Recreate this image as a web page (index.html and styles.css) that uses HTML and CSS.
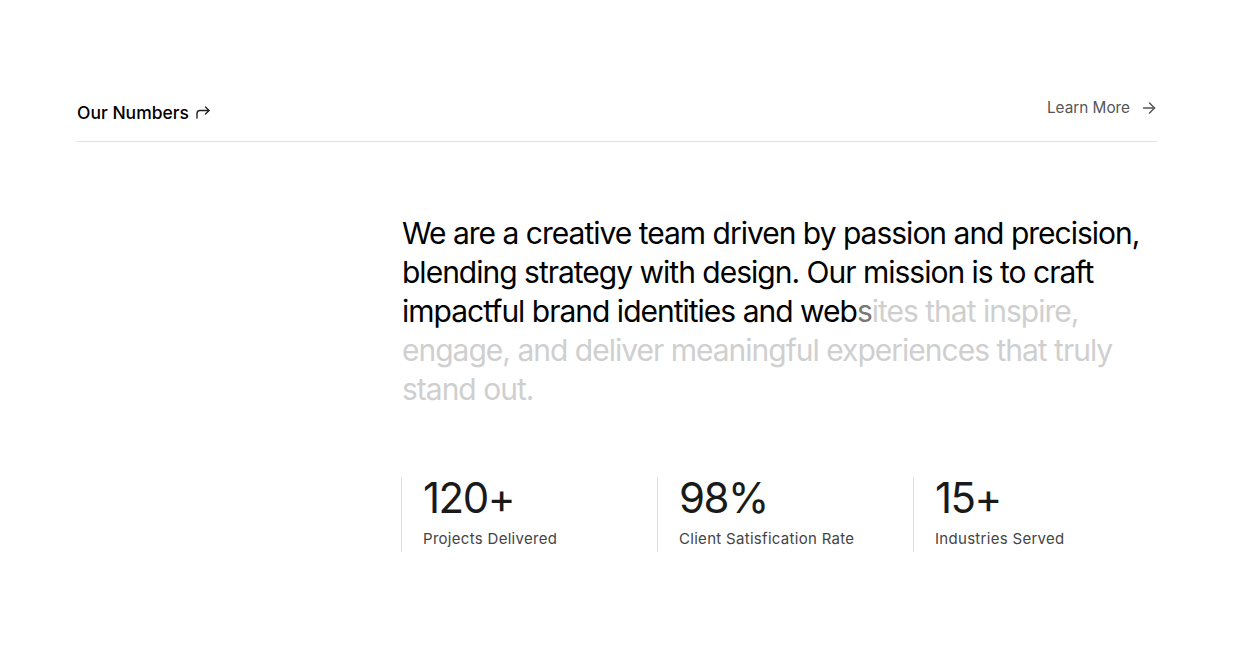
FILE: index.html
```html
<!DOCTYPE html>
<html lang="en">
<head>
<meta charset="utf-8">
<title>Our Numbers</title>
<link rel="stylesheet" href="styles.css">
</head>
<body>
<section class="numbers">
  <header class="numbers-head">
    <h2 class="title">Our Numbers
      <svg class="title-icon" width="16" height="14" viewBox="0 0 16 14" fill="none" stroke="currentColor" stroke-width="1.4" stroke-linecap="round" stroke-linejoin="round"><path d="M2 13V8.5C2 6.5 3 5.5 5 5.5H14"/><path d="M10.5 2L14 5.5L10.5 9"/></svg>
    </h2>
    <a class="more" href="#">Learn More
      <svg class="more-icon" width="16" height="16" viewBox="0 0 16 16" fill="none" stroke="currentColor" stroke-width="1.5" stroke-linecap="round" stroke-linejoin="round"><path d="M2.5 8H13.5"/><path d="M8.5 3L13.5 8L8.5 13"/></svg>
    </a>
  </header>
  <div class="body">
    <p class="mission"><span class="on">We are a creative team driven by passion and precision, blending strategy with design. Our mission is to craft impactful brand identities and web</span><span class="mid">s</span><span class="off">ites that inspire, engage, and deliver meaningful experiences that truly stand out.</span></p>
    <div class="stats">
      <div class="stat"><div class="num">120+</div><div class="label">Projects Delivered</div></div>
      <div class="stat"><div class="num">98%</div><div class="label">Client Satisfication Rate</div></div>
      <div class="stat"><div class="num">15+</div><div class="label">Industries Served</div></div>
    </div>
  </div>
</section>
</body>
</html>
```
FILE: styles.css
```css
* { box-sizing: border-box; }
html, body { margin: 0; background: #fff; }
body { font-family: Inter, "Noto Sans", sans-serif; color: #111; }

.numbers {
  width: 1080px;
  margin: 0 0 0 77px;
  padding-top: 97px;
}
.numbers-head {
  display: flex;
  justify-content: space-between;
  align-items: flex-end;
  padding-bottom: 15px;
  border-bottom: 1px solid #e2e2e2;
}
.title {
  margin: 0 0 1px;
  font-size: 17.5px;
  font-weight: 500;
  line-height: 24px;
  letter-spacing: 0;
  color: #000;
  display: flex;
  align-items: center;
  gap: 6px;
}
.title-icon { color: #222; margin-top: -3px; }
.more {
  display: flex;
  align-items: center;
  gap: 11px;
  font-size: 15.3px;
  line-height: 22px;
  color: #555;
  text-decoration: none;
  margin-bottom: 7px;
}
.more-icon { color: #555; }

.body { padding-left: 325px; }
.mission {
  margin: 72px 0 0;
  font-size: 30px;
  line-height: 39px;
  letter-spacing: -1px;
  width: 760px;
  font-weight: 400;
}
.on { color: #000; }
.mid { color: #777; }
.off { color: #cfcfcf; }

.stats {
  display: grid;
  grid-template-columns: repeat(3, 256px);
  margin-top: 68px;
  margin-left: -1px;
}
.stat {
  border-left: 1px solid #dedede;
  padding: 0 0 2px 21px;
}
.num {
  font-size: 42px;
  line-height: 42px;
  letter-spacing: -1.5px;
  color: #1a1a1a;
}
.label {
  margin-top: 9px;
  font-size: 15px;
  line-height: 22px;
  letter-spacing: 0.3px;
  color: #444;
}
```
